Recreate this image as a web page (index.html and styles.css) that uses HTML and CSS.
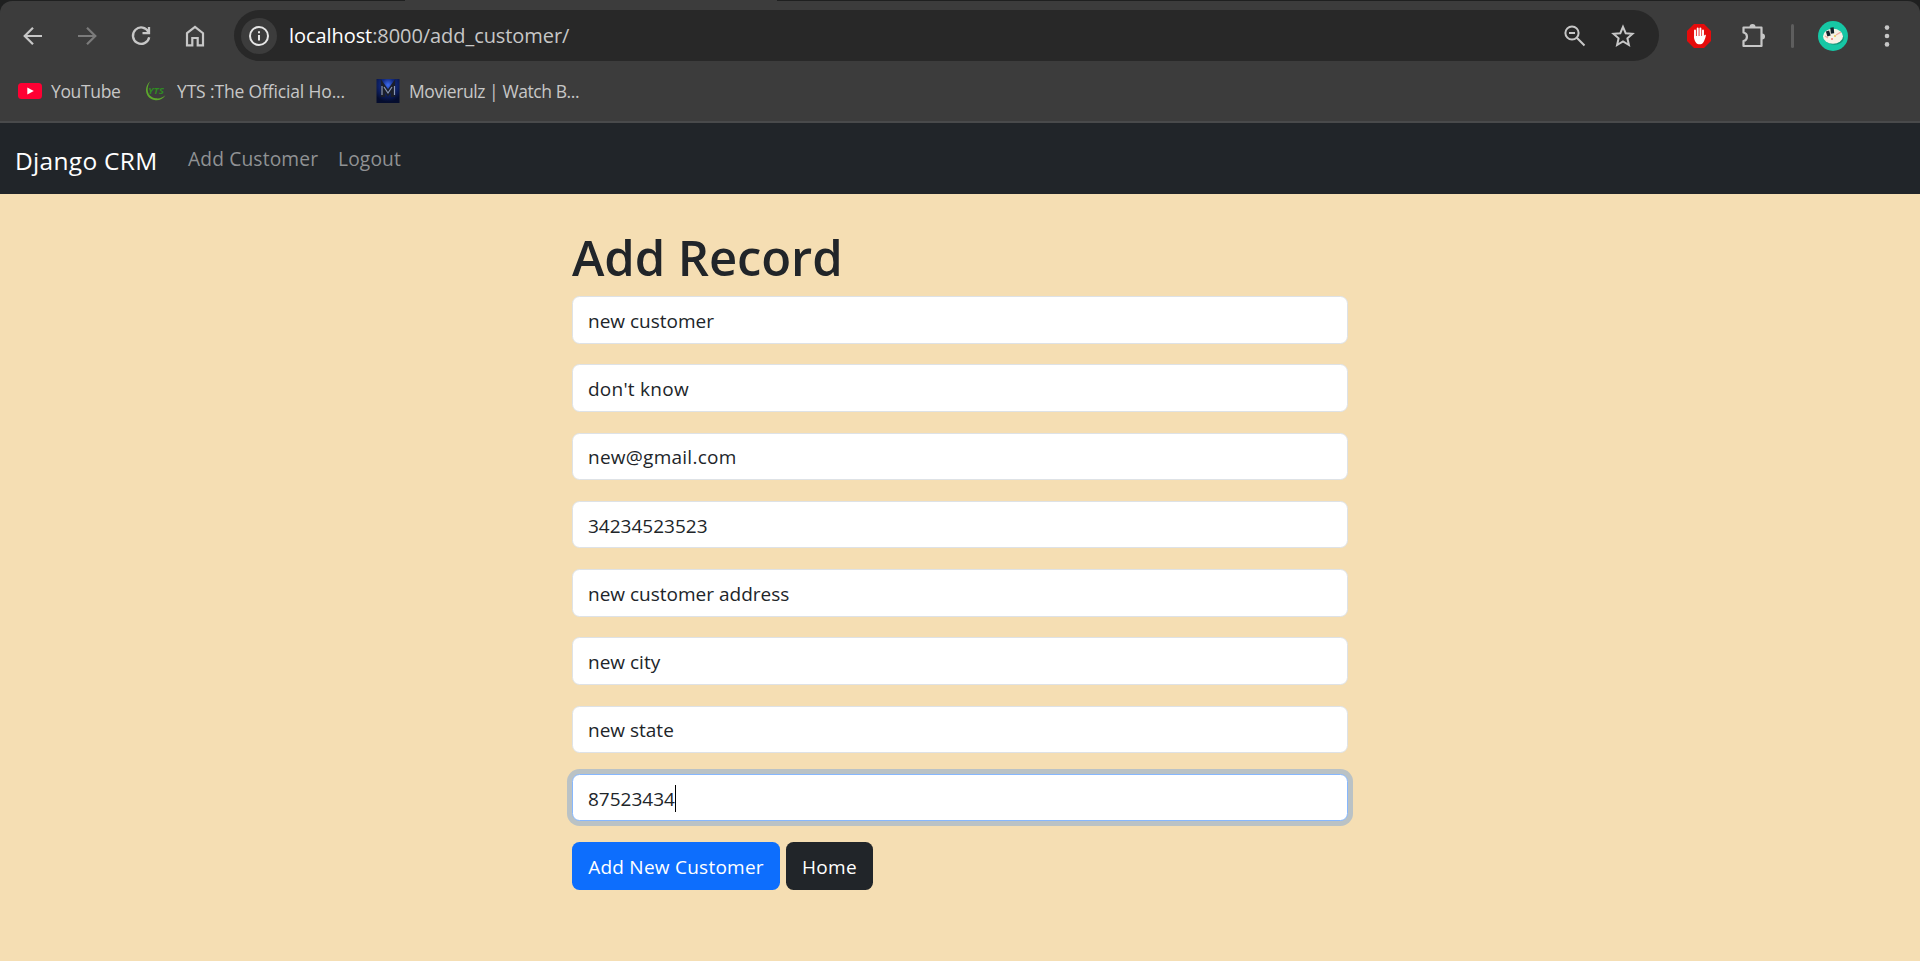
FILE: index.html
```html
<!DOCTYPE html>
<html lang="en">
<head>
<meta charset="utf-8">
<title>Django CRM</title>
<link rel="stylesheet" href="styles.css">
</head>
<body>
<header class="browser">
  <div class="tabstrip"><span class="tab-active"></span></div>
  <div class="chrome">
    <div class="toolbar">
      <span class="tool"><svg width="24" height="24" viewBox="0 0 24 24" fill="none" stroke="#c7c7c7" stroke-width="2.2"><path d="M21 12H4M12 3.7L3.7 12l8.300 8.300"/></svg></span>
      <span class="tool"><svg width="24" height="24" viewBox="0 0 24 24" fill="none" stroke="#7b7b7b" stroke-width="2.200"><path d="M3 12h17M12 3.700L20.300 12 12 20.300"/></svg></span>
      <span class="tool"><svg width="24" height="24" viewBox="0 0 24 24" fill="none" stroke="#c7c7c7" stroke-width="2.300"><path d="M19.500 8A8.200 8.200 0 1 0 20.200 13.300M20 3v6.200h-6.500"/></svg></span>
      <span class="tool"><svg width="24" height="24" viewBox="0 0 24 24" fill="none" stroke="#c7c7c7" stroke-width="2.200"><path d="M4 9.200L12 3l8 6.200V21.300h-5.300V14H9.300v7.300H4z"/></svg></span>
      <div class="omnibox">
        <span class="info"><svg width="22" height="22" viewBox="0 0 22 22"><circle cx="11" cy="11" r="9" fill="none" stroke="#e6e6e6" stroke-width="2"/><path d="M11 10v5.500M11 6.200v2" stroke="#e6e6e6" stroke-width="2"/></svg></span>
        <span class="url"><b>localhost</b>:8000/add_customer/</span>
        <span class="omni-tool"><svg width="24" height="24" viewBox="0 0 24 24" fill="none" stroke="#c7c7c7" stroke-width="2"><circle cx="9" cy="9" r="6.600"/><path d="M6 9h6M13.800 13.800L21.500 21.500"/></svg></span>
        <span class="omni-tool"><svg width="24" height="24" viewBox="0 0 24 24" fill="none" stroke="#c7c7c7" stroke-width="2"><path d="M12 2.900l2.700 6.300 6.800.6-5.100 4.500 1.500 6.700-5.900-3.500-5.900 3.500 1.500-6.700L2.500 9.800l6.800-.6z"/></svg></span>
      </div>
      <span class="tool"><svg width="24" height="24" viewBox="0 0 24 24"><path d="M7 0h10l7 7v10l-7 7H7l-7-7V7z" fill="#e50b0b"/><path d="M8 6.500v7M10.700 4.500V13M13.400 4.500V13M16 6.500V13" stroke="#fff" stroke-width="1.900" stroke-linecap="round"/><path d="M7.050 12h9.900l.6-1c.5-.6 1.600-.2 1.300.7-.7 3-1.700 5.500-2.800 7-1.600 2.100-5.400 2-7 0-1.500-1.700-2-3.700-2-6.700z" fill="#fff"/></svg></span>
      <span class="tool"><svg width="26" height="26" viewBox="0 0 26 26"><path d="M3.500 4.500h18v18.500h-18v-5c4.600-1 4.600-7.500 0-8.500z" fill="none" stroke="#c7c7c7" stroke-width="2.200" stroke-linejoin="round"/><path d="M9.500 4a3 3 0 0 1 6 0zM22 10.500a3 3 0 0 1 0 6z" fill="#c7c7c7"/></svg></span>
      <span class="divider"></span>
      <span class="tool"><svg width="30" height="30" viewBox="0 0 30 30"><circle cx="15" cy="15" r="15" fill="#16c7a5"/><ellipse cx="16.500" cy="17" rx="9.300" ry="6.800" fill="#159477"/><ellipse cx="15" cy="15.200" rx="10" ry="7.500" fill="#f6f1e6"/><path d="M9.500 10l1.500 5M14 6.500l.5 6" fill="none" stroke="#14222c" stroke-width="3.400"/><path d="M18 14l5-3M7 15l3 2" stroke="#f0a9a0" stroke-width="1.300"/><circle cx="14" cy="18" r="1" fill="#e77"/><circle cx="17" cy="15" r="1" fill="#e8c34b"/></svg></span>
      <span class="tool"><svg width="24" height="24" viewBox="0 0 24 24" fill="#c7c7c7"><circle cx="12" cy="3.600" r="2.300"/><circle cx="12" cy="12" r="2.300"/><circle cx="12" cy="20.400" r="2.300"/></svg></span>
    </div>
    <div class="bookmarks">
      <span class="bookmark youtube"><svg width="24" height="24" viewBox="0 0 24 24"><rect y="4" width="24" height="16" rx="3.500" fill="#ff0033"/><path d="M9.300 8.500v7l6.500-3.500z" fill="#fff"/></svg>YouTube</span>
      <span class="bookmark yts"><svg width="24" height="24" viewBox="0 0 24 24"><path d="M6.500 2C-1 8 1 20 11.500 21.300c4 .4 7.500-1.500 10-5-3 2.400-6 3.600-9.500 3C3 18 1.500 9 6.500 2z" fill="#5da82d"/><text x="4" y="14.500" class="yts-mark" textLength="16" lengthAdjust="spacingAndGlyphs">YTS</text></svg>YTS :The Official Ho...</span>
      <span class="bookmark movie"><svg width="24" height="24" viewBox="0 0 24 24"><defs><radialGradient id="glow" cx=".5" cy=".25" r=".7"><stop offset="0" stop-color="#3f6cf0"/><stop offset=".4" stop-color="#122a80"/><stop offset="1" stop-color="#050d2e"/></radialGradient></defs><rect x=".5" width="23" height="24" fill="url(#glow)"/><path d="M7 18V7l5 7 5-7v11" fill="none" stroke="#1b1f2b" stroke-width="4.500"/><path d="M6 16V7M8 8l4 6 4-6M18.500 7v9" fill="none" stroke="#8b97b4" stroke-width="1.200"/></svg>Movierulz | Watch B...</span>
    </div>
  </div>
</header>
<nav class="navbar">
  <a class="brand">Django CRM</a>
  <a class="nav-link add">Add Customer</a>
  <a class="nav-link logout">Logout</a>
</nav>
<main class="page">
  <h1 class="title">Add Record</h1>
  <form class="form">
    <div class="field">new customer</div>
    <div class="field wide">don't know</div>
    <div class="field wide">new@gmail.com</div>
    <div class="field">34234523523</div>
    <div class="field">new customer address</div>
    <div class="field">new city</div>
    <div class="field">new state</div>
    <div class="field focused">87523434<span class="caret"></span></div>
    <div class="actions">
      <button type="button" class="btn primary">Add New Customer</button>
      <button type="button" class="btn dark">Home</button>
    </div>
  </form>
</main>
</body>
</html>
```
FILE: styles.css
```css
* { box-sizing: border-box; }
body {
  margin: 0;
  height: 961px;
  overflow: hidden;
  background: #f5deb3;
  color: #212529;
  font-family: "Open Sans", "Noto Sans", sans-serif;
  font-size: 19px;
}
.browser { background: #1f2020; }
.tabstrip { height: 1px; padding-left: 405px; }
.tab-active { display: block; width: 372px; height: 1px; background: #3c3c3c; }
.chrome {
  height: 122px;
  background: #3c3c3c;
  border-bottom: 2px solid #494a4b;
  border-radius: 12px 12px 0 0;
}
.toolbar { display: flex; align-items: center; height: 69px; padding: 0 6px; }
.tool { display: flex; width: 54px; justify-content: center; flex: none; }
.omnibox {
  display: flex;
  align-items: center;
  flex: 1;
  height: 51px;
  margin: 0 13px 0 12px;
  padding: 0 12px 0 7px;
  border-radius: 26px;
  background: #282828;
}
.info {
  display: flex;
  align-items: center;
  justify-content: center;
  width: 36px;
  height: 36px;
  border-radius: 50%;
  background: #3c3c3c;
}
.url { flex: 1; margin-left: 12px; font-size: 20px; letter-spacing: -0.07px; color: #c7c7c7; white-space: nowrap; }
.url b { font-weight: 400; color: #fff; }
.omni-tool { display: flex; width: 48px; justify-content: center; }
.divider { width: 3px; height: 24px; margin: 0 12px 0 11px; border-radius: 2px; background: #5e5e5e; }
.bookmarks { display: flex; align-items: center; height: 41px; padding-left: 18px; font-size: 17.500px; color: #c7c7c7; }
.bookmark { display: flex; align-items: center; gap: 9px; white-space: nowrap; }
.youtube { width: 126px; letter-spacing: -0.350px; }
.yts { width: 232px; letter-spacing: -0.150px; }
.movie { letter-spacing: -0.420px; }
.yts-mark { font: italic bold 9px "Open Sans", sans-serif; letter-spacing: 0; fill: #2f8a22; }
.navbar { display: flex; align-items: center; height: 71px; padding-left: 15px; background: #212529; }
.brand { width: 173px; padding-top: 4px; font-size: 24.500px; letter-spacing: 0.300px; color: #fff; white-space: nowrap; }
.nav-link { color: #909294; font-size: 19.200px; letter-spacing: 0.150px; white-space: nowrap; }
.add { width: 150px; }
.page { width: 776px; margin: 0 auto; padding-top: 33px; }
.title { margin: 0; height: 69px; font-size: 49px; line-height: 60px; font-weight: 600; letter-spacing: -0.100px; white-space: nowrap; }
.form { display: flex; flex-direction: column; }
.field {
  display: flex;
  align-items: center;
  height: 47.500px;
  margin-bottom: 20.750px;
  padding: 2px 15px 0;
  border: 1px solid #dee2e6;
  border-radius: 7.500px;
  background: #fff;
}
.wide { letter-spacing: 0.250px; }
.focused { border-color: #86b7fe; box-shadow: 0 0 0 5px rgba(13, 110, 253, .25); }
.caret { width: 1px; height: 27px; background: #000; }
.actions { display: flex; gap: 6px; }
.btn { height: 48px; padding: 1px 0 0; border: 0; border-radius: 7.500px; font: inherit; color: #fff; white-space: nowrap; }
.primary { width: 208px; background: #0d6efd; letter-spacing: 0.250px; }
.dark { width: 87px; background: #212529; letter-spacing: 0.300px; }
```
